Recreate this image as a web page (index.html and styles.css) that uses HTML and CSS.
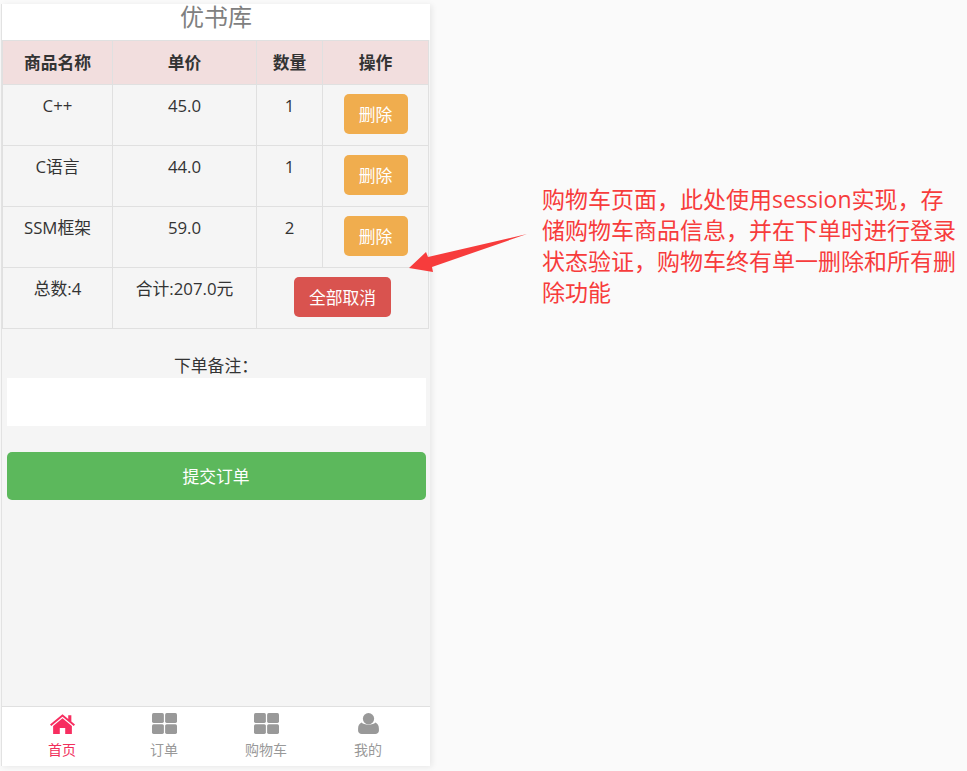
FILE: index.html
```html
<!DOCTYPE html>
<html lang="zh-CN">
<head>
    <meta charset="UTF-8">
    <meta name="viewport" content="width=device-width, initial-scale=1.0">
    <title>优书库</title>
    <link rel="stylesheet" href="styles.css">
</head>
<body>
    <div class="phone">
        <header class="title">优书库</header>
        <table class="cart">
            <colgroup>
                <col class="col-name">
                <col class="col-price">
                <col class="col-num">
                <col class="col-op">
            </colgroup>
            <thead>
                <tr>
                    <th>商品名称</th>
                    <th>单价</th>
                    <th>数量</th>
                    <th>操作</th>
                </tr>
            </thead>
            <tbody>
                <tr>
                    <td>C++</td>
                    <td>45.0</td>
                    <td>1</td>
                    <td><button class="btn btn-warning">删除</button></td>
                </tr>
                <tr>
                    <td>C语言</td>
                    <td>44.0</td>
                    <td>1</td>
                    <td><button class="btn btn-warning">删除</button></td>
                </tr>
                <tr>
                    <td>SSM框架</td>
                    <td>59.0</td>
                    <td>2</td>
                    <td><button class="btn btn-warning">删除</button></td>
                </tr>
                <tr>
                    <td>总数:4</td>
                    <td>合计:207.0元</td>
                    <td colspan="2"><button class="btn btn-danger">全部取消</button></td>
                </tr>
            </tbody>
        </table>
        <form class="order">
            <label class="order-label" for="note">下单备注：</label>
            <input class="order-input" type="text" id="note">
            <button class="btn btn-success" type="button">提交订单</button>
        </form>
        <nav class="tabbar">
            <a class="tab active">
                <svg class="tab-icon" viewBox="0 0 24 20"><path d="M12 1 L17.5 5.6 V2 H20.5 V8.1 L24 11 L22.8 12.4 L12 3.5 L1.2 12.4 L0 11 Z"/><path d="M12 5 L21 12.4 V20 H14.6 V14.4 H9.4 V20 H3 V12.4 Z"/></svg>
                <span>首页</span>
            </a>
            <a class="tab">
                <svg class="tab-icon" viewBox="0 0 24 20"><rect x="0" y="0" width="11.4" height="9.4" rx="1.5"/><rect x="12.6" y="0" width="11.4" height="9.4" rx="1.5"/><rect x="0" y="10.6" width="11.4" height="9.4" rx="1.5"/><rect x="12.6" y="10.6" width="11.4" height="9.4" rx="1.5"/></svg>
                <span>订单</span>
            </a>
            <a class="tab">
                <svg class="tab-icon" viewBox="0 0 24 20"><rect x="0" y="0" width="11.4" height="9.4" rx="1.5"/><rect x="12.6" y="0" width="11.4" height="9.4" rx="1.5"/><rect x="0" y="10.6" width="11.4" height="9.4" rx="1.5"/><rect x="12.6" y="10.6" width="11.4" height="9.4" rx="1.5"/></svg>
                <span>购物车</span>
            </a>
            <a class="tab">
                <svg class="tab-icon" viewBox="0 0 24 20"><circle cx="12" cy="5.4" r="5.4"/><path d="M5.5 9 C7 11.6 17 11.6 18.5 9 C20.8 10 22 12 22 15 V17 C22 19 20.5 20 18.5 20 H5.5 C3.5 20 2 19 2 17 V15 C2 12 3.2 10 5.5 9 Z"/></svg>
                <span>我的</span>
            </a>
        </nav>
    </div>

    <!-- note drawn on top of the screenshot -->
    <svg class="arrow" viewBox="0 0 120 46"><polygon points="119,2 20,25 18,20 1,36 25,40 24,35"/></svg>
    <p class="note">购物车页面，此处使用session实现，存储购物车商品信息，并在下单时进行登录状态验证，购物车终有单一删除和所有删除功能</p>
</body>
</html>
```

FILE: styles.css
```css
* {
    margin: 0;
    padding: 0;
    box-sizing: border-box;
}
body {
    position: relative;
    height: 771px;
    overflow: hidden;
    font-family: "Open Sans", "Noto Sans CJK SC", sans-serif;
    font-size: 16.8px;
    color: #333;
    background-color: #fafafa;
}
.phone {
    display: flex;
    flex-direction: column;
    width: 429px;
    height: 762px;
    margin: 4px 0 0 1px;
    background-color: #f5f5f5;
    border-left: 1px solid #e2e2e2;
    box-shadow: 2px 1px 6px rgba(0, 0, 0, 0.08);
}
.title {
    height: 36px;
    font-size: 24px;
    line-height: 26px;
    text-align: center;
    color: #808080;
    background-color: #fff;
}
.cart {
    width: 426px;
    border-collapse: collapse;
    table-layout: fixed;
}
.col-name { width: 110px; }
.col-price { width: 144px; }
.col-num { width: 66px; }
.col-op { width: 106px; }
.cart th, .cart td {
    border: 1px solid #e0e0e0;
    text-align: center;
    font-size: 16.8px;
}
.cart th {
    height: 44px;
    font-weight: 700;
    line-height: 43px;
    background-color: #f2dede;
}
.cart td {
    height: 61px;
    padding: 8px 0 0;
    line-height: 25px;
    vertical-align: top;
}
.btn {
    font-family: inherit;
    font-size: 16.8px;
    color: #fff;
    border: 1px solid transparent;
    border-radius: 5px;
    cursor: pointer;
}
.cart .btn {
    display: block;
    height: 40px;
    margin: 1px auto 0;
}
.btn-warning {
    width: 64px;
    background-color: #f0ad4e;
}
.btn-danger {
    width: 97px;
    background-color: #d9534f;
}
.btn-success {
    width: 419px;
    height: 48px;
    background-color: #5cb85c;
}
.order {
    display: flex;
    flex-direction: column;
    align-items: center;
    padding: 25px 5px 0;
}
.order-label {
    height: 24px;
    line-height: 24px;
}
.order-input {
    width: 419px;
    height: 48px;
    margin-bottom: 26px;
    border: none;
    background-color: #fff;
}
.tabbar {
    display: grid;
    grid-template-columns: repeat(4, 102px);
    height: 60px;
    margin-top: auto;
    padding: 0 9px;
    border-top: 1px solid #e0e0e0;
    background-color: #fff;
}
.tab {
    display: flex;
    flex-direction: column;
    align-items: center;
    padding-top: 6px;
    font-size: 14px;
    line-height: 20px;
    color: #999;
}
.tab-icon {
    width: 25px;
    height: 21px;
    margin-bottom: 6px;
    fill: #999;
}
.tab.active {
    color: #f12f5b;
}
.tab.active .tab-icon {
    fill: #f72e60;
}
.arrow {
    position: absolute;
    left: 408px;
    top: 232px;
    width: 120px;
    height: 46px;
    fill: #f73c3c;
}
.note {
    position: absolute;
    left: 542px;
    top: 184px;
    width: 418px;
    font-size: 23px;
    line-height: 31px;
    color: #f73c3c;
}
```
